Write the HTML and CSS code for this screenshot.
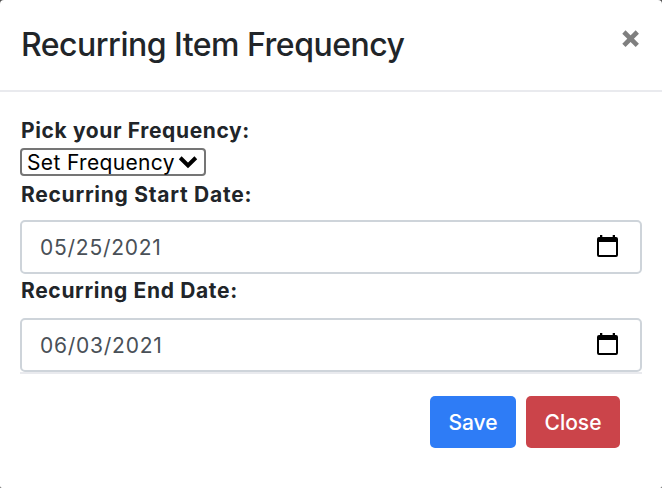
FILE: index.html
```
<!DOCTYPE html>
<html lang="en">
<head>
<meta charset="utf-8">
<title>Recurring Item Frequency</title>
<link rel="stylesheet" href="styles.css">
</head>
<body>
<div class="modal">
  <header class="modal-header">
    <h1 class="modal-title">Recurring Item Frequency</h1>
    <button class="close" aria-label="Close">
      <svg width="18" height="18" viewBox="0 0 18 18"><path d="M1.9 2 15.3 15.4M15.3 2 1.9 15.4" stroke="#7f7f7f" stroke-width="4.6" fill="none"/></svg>
    </button>
  </header>
  <div class="modal-body">
    <div class="label label-frequency">Pick your Frequency:</div>
    <div class="select" role="combobox">
      <span class="select-text">Set Frequency</span>
      <svg width="20" height="14" viewBox="0 0 20 14"><path d="M2.2 2.8 10 10.4 17.8 2.8" stroke="#000" stroke-width="4" fill="none"/></svg>
    </div>
    <div class="label label-start">Recurring Start Date:</div>
    <div class="date">
      <span class="date-text">05/25/2021</span>
      <svg width="22" height="24" viewBox="0 0 22 24"><path fill-rule="evenodd" d="M2 2H3V0H5.3V2H15.7V0H18V2H19Q21 2 21 4V20Q21 22 19 22H2Q0 22 0 20V4Q0 2 2 2ZM2 7V20H19V7Z"/></svg>
    </div>
    <div class="label label-end">Recurring End Date:</div>
    <div class="date date-end">
      <span class="date-text">06/03/2021</span>
      <svg width="22" height="24" viewBox="0 0 22 24"><path fill-rule="evenodd" d="M2 2H3V0H5.3V2H15.7V0H18V2H19Q21 2 21 4V20Q21 22 19 22H2Q0 22 0 20V4Q0 2 2 2ZM2 7V20H19V7Z"/></svg>
    </div>
    <footer class="modal-footer">
      <button class="btn btn-save">Save</button>
      <button class="btn btn-close">Close</button>
    </footer>
  </div>
</div>
</body>
</html>
```
FILE: styles.css
```
* { box-sizing: border-box; }
body {
  margin: 0;
  background: #505050;
  font-family: Inter, "Liberation Sans", sans-serif;
  color: #212529;
  overflow: hidden;
}
svg { display: block; flex: none; }
button { border: 0; margin: 0; padding: 0; font: inherit; background: none; }
.modal {
  height: 488px;
  background: #fff;
  border-radius: 4px 4px 2px 2px;
}
.modal-header {
  display: flex;
  justify-content: space-between;
  height: 92px;
  padding: 24px 22px 0 21px;
  border-bottom: 2px solid #e9eaee;
}
.modal-title {
  margin: 0;
  font-size: 32px;
  line-height: 42px;
  font-weight: 540;
  letter-spacing: -0.5px;
  white-space: nowrap;
}
.close { height: 18px; margin-top: 6px; }
.modal-body { padding: 24px 20px 0; }
.label {
  padding-left: 1px;
  font-size: 21px;
  font-weight: 700;
  line-height: 28px;
  letter-spacing: 0.66px;
  white-space: nowrap;
}
.label-frequency { height: 32px; padding-top: 1px; letter-spacing: 0.62px; }
.select {
  display: flex;
  align-items: center;
  justify-content: space-between;
  width: 186px;
  height: 28px;
  padding: 0 6px 0 5px;
  border: 2px solid #757575;
  border-radius: 4px;
  color: #000;
  font-size: 21px;
  letter-spacing: 0.35px;
  white-space: nowrap;
}
.label-start { height: 44px; padding-top: 5px; letter-spacing: 0.74px; }
.date {
  display: flex;
  align-items: center;
  justify-content: space-between;
  height: 54px;
  padding: 0 21px 0 18px;
  border: 2px solid #ced4da;
  border-radius: 5px;
  color: #495057;
  font-size: 21px;
  letter-spacing: 0.75px;
}
.label-end { height: 44px; padding-top: 3px; }
.modal-footer {
  display: flex;
  justify-content: flex-end;
  gap: 10px;
  padding: 22px 22px 0;
  border-top: 2px solid #e9eaee;
}
.btn {
  height: 52px;
  border-radius: 5px;
  color: #fff;
  font-size: 21px;
  font-weight: 500;
}
.btn-save { width: 86px; background: #2e7cf6; }
.btn-close { width: 94px; background: #cb444a; }
```
